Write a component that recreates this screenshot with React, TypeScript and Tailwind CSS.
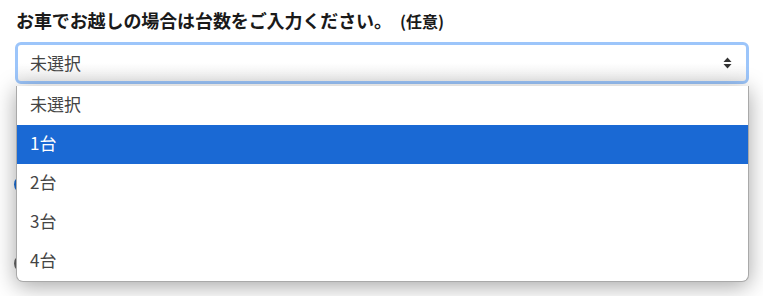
import React from "react";

const jp = { fontFamily: '"Noto Sans CJK JP", "Noto Sans", sans-serif' };

export default function App() {
  const options = ["未選択", "1台", "2台", "3台", "4台"];
  return (
    <div className="w-[763px] h-[296px] bg-white overflow-hidden" style={jp}>
      <div className="relative pl-[15px] pr-[14px] pt-[7px]">
        <div className="flex items-baseline h-[27px] pl-[1px] text-[#1a1a1a]">
          <span className="text-[18px] font-bold tracking-[-0.1px]">お車でお越しの場合は台数をご入力ください。</span>
          <span className="text-[16px] font-bold ml-[8px]">(任意)</span>
        </div>
        <div className="mt-[8px] h-[42px] rounded-[6px] border-[3px] border-[#9cc5fa] bg-gradient-to-b from-white via-white to-[#efefef] flex items-center justify-between pl-[12px] pr-[14px]">
          <span className="text-[17px] text-[#444]">未選択</span>
          <svg width="9" height="12" viewBox="0 0 9 12">
            <path d="M4.5 0.5 L8.5 5 L0.5 5 Z" fill="#333" />
            <path d="M0.5 7 L8.5 7 L4.5 11.5 Z" fill="#333" />
          </svg>
        </div>
        <div className="flex flex-col gap-[60px] mt-[91px] ml-[-1px]">
          <div className="w-[19px] h-[19px] rounded-full bg-[#1a6ed8]" />
          <div className="w-[19px] h-[19px] rounded-full border-2 border-[#666]" />
        </div>
        <div className="absolute left-[16px] top-[86px] w-[733px] bg-white border-[1.5px] border-[#a9a9a9] border-t-0 rounded-b-[7px] shadow-[0_4px_22px_rgba(0,0,0,0.36)] overflow-hidden">
          {options.map((o, i) => (
            <div
              key={o}
              className={
                "h-[39px] flex items-center pl-[13px] pb-[3px] text-[17px] " +
                (i === 1 ? "bg-[#1a69d4] text-white" : "text-[#444]")
              }
            >
              {o}
            </div>
          ))}
        </div>
      </div>
    </div>
  );
}
